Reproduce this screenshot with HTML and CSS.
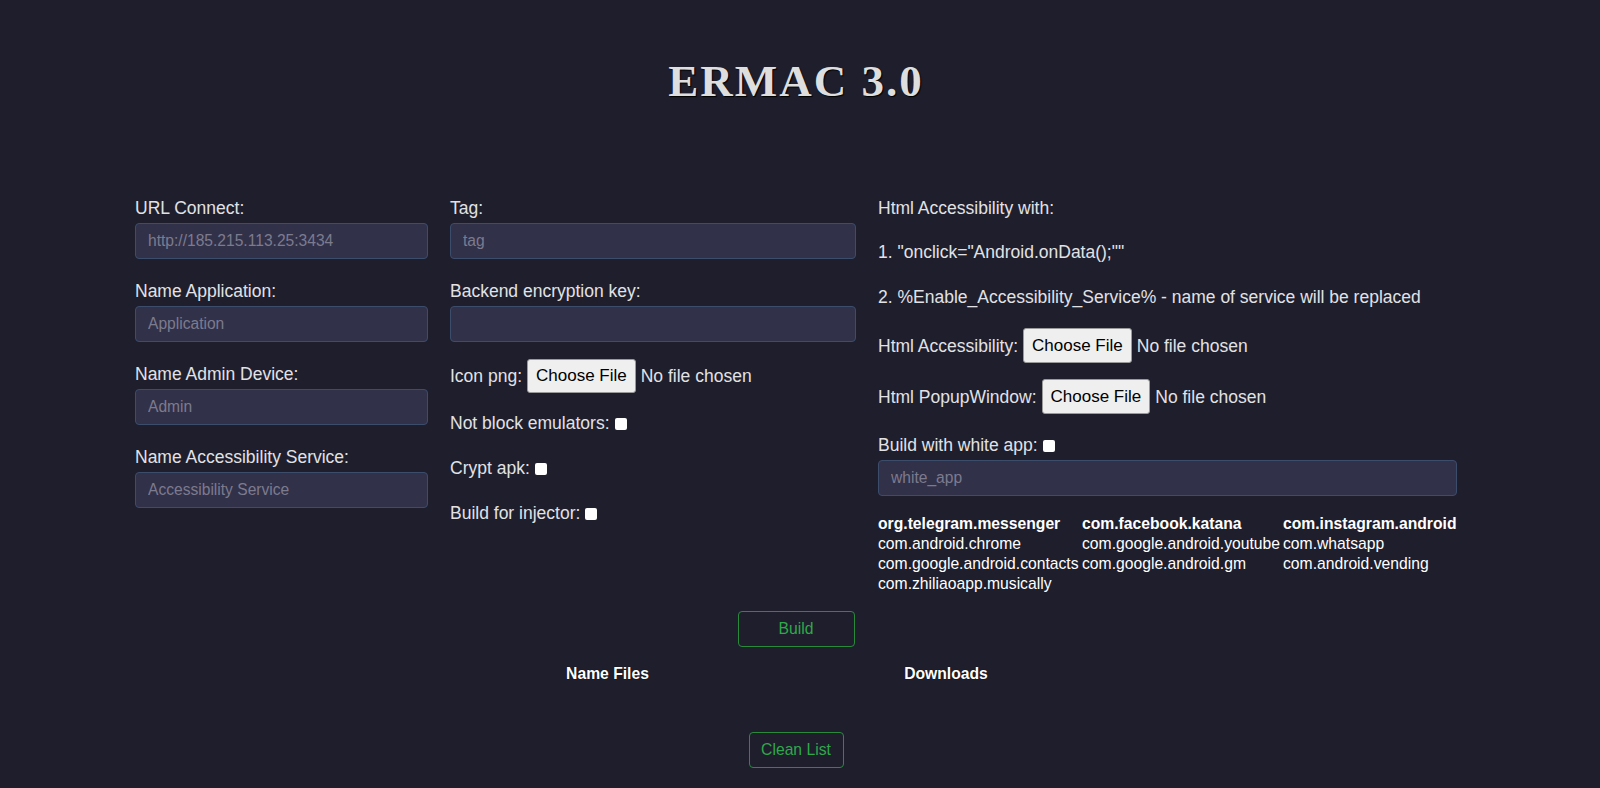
FILE: index.html
```html
<!DOCTYPE html>
<html lang="en">
<head>
<meta charset="utf-8">
<title>ERMAC 3.0</title>
<link rel="stylesheet" href="styles.css">
</head>
<body>
<div class="page">
  <h1 class="title">ERMAC 3.0</h1>
  <form class="form">
    <div class="col">
      <div class="field">
        <label class="label">URL Connect:</label>
        <input class="input" type="text" placeholder="http://185.215.113.25:3434">
      </div>
      <div class="field">
        <label class="label">Name Application:</label>
        <input class="input" type="text" placeholder="Application">
      </div>
      <div class="field">
        <label class="label">Name Admin Device:</label>
        <input class="input" type="text" placeholder="Admin">
      </div>
      <div class="field">
        <label class="label">Name Accessibility Service:</label>
        <input class="input" type="text" placeholder="Accessibility Service">
      </div>
    </div>
    <div class="col">
      <div class="field">
        <label class="label">Tag:</label>
        <input class="input" type="text" placeholder="tag">
      </div>
      <div class="field tight">
        <label class="label">Backend encryption key:</label>
        <input class="input" type="text">
      </div>
      <div class="file-row">
        <span>Icon png:</span>
        <span class="file-btn">Choose File</span>
        <span>No file chosen</span>
      </div>
      <div class="check-row first">Not block emulators:<input class="check" type="checkbox"></div>
      <div class="check-row">Crypt apk:<input class="check" type="checkbox"></div>
      <div class="check-row">Build for injector:<input class="check" type="checkbox"></div>
    </div>
    <div class="col">
      <p class="line">Html Accessibility with:</p>
      <p class="line l2">1. "onclick="Android.onData();""</p>
      <p class="line l3">2. %Enable_Accessibility_Service% - name of service will be replaced</p>
      <div class="file-row fr-a">
        <span>Html Accessibility:</span>
        <span class="file-btn tall">Choose File</span>
        <span>No file chosen</span>
      </div>
      <div class="file-row fr-b">
        <span>Html PopupWindow:</span>
        <span class="file-btn tall">Choose File</span>
        <span>No file chosen</span>
      </div>
      <div class="line l-white">Build with white app:<input class="check" type="checkbox"></div>
      <input class="input white-input" type="text" placeholder="white_app">
      <div class="packages">
        <span class="pkg-bold">org.telegram.messenger</span>
        <span class="pkg-bold">com.facebook.katana</span>
        <span class="pkg-bold">com.instagram.android</span>
        <span>com.android.chrome</span>
        <span>com.google.android.youtube</span>
        <span>com.whatsapp</span>
        <span>com.google.android.contacts</span>
        <span>com.google.android.gm</span>
        <span>com.android.vending</span>
        <span>com.zhiliaoapp.musically</span>
      </div>
    </div>
  </form>
  <div class="actions build-wrap">
    <button class="btn btn-build" type="button">Build</button>
  </div>
  <div class="files-head">
    <span class="fh-name">Name Files</span>
    <span class="fh-down">Downloads</span>
  </div>
  <div class="actions clean-wrap">
    <button class="btn btn-clean" type="button">Clean List</button>
  </div>
</div>
</body>
</html>
```

FILE: styles.css
```css
body {
  margin: 0;
  background: #1e1e2d;
  font-family: "Liberation Sans", Arial, sans-serif;
  color: #e2e2e4;
}

.page {
  width: 1322px;
  margin-left: 135px;
}

.title {
  margin: 0;
  padding-top: 59px;
  text-align: center;
  font-family: "Liberation Serif", "Times New Roman", serif;
  font-weight: bold;
  font-size: 45px;
  line-height: 45px;
  letter-spacing: 2px;
  color: #dedede;
  text-shadow: 1px 1px 1px #000;
}

.form {
  display: grid;
  grid-template-columns: 293px 406px 579px;
  column-gap: 22px;
  margin-top: 94px;
  align-items: start;
}

.col {
  display: flex;
  flex-direction: column;
}

.field {
  display: flex;
  flex-direction: column;
  gap: 5px;
  margin-bottom: 22px;
}

.field.tight {
  margin-bottom: 17px;
}

.label {
  font-size: 17.5px;
  line-height: 20px;
}

.input {
  box-sizing: border-box;
  height: 36px;
  width: 100%;
  margin: 0;
  padding: 0 12px;
  background: #32314a;
  border: 1px solid #3b4d6b;
  border-radius: 4px;
  font-family: "Liberation Sans", Arial, sans-serif;
  font-size: 15.6px;
  color: #dcdcdc;
  outline: none;
}

.input::placeholder {
  color: #7c7b8e;
}

.file-row {
  display: flex;
  align-items: center;
  gap: 5px;
  height: 34px;
  font-size: 17.5px;
  line-height: 20px;
}

.file-btn {
  box-sizing: border-box;
  display: flex;
  align-items: center;
  height: 34px;
  padding: 0 8px;
  background: #efefef;
  border: 1px solid #9a9a9a;
  border-radius: 3px;
  color: #000;
  font-size: 17px;
}

.file-btn.tall,
.fr-a,
.fr-b {
  height: 35px;
}

.check-row {
  font-size: 17.5px;
  line-height: 20px;
  margin-top: 25px;
}

.check-row.first {
  margin-top: 20px;
}

.check {
  -webkit-appearance: none;
  appearance: none;
  width: 12px;
  height: 12px;
  margin: 0 0 0 5px;
  background: #fff;
  border: none;
  border-radius: 2px;
  vertical-align: -1px;
}

.line {
  margin: 0;
  font-size: 17.5px;
  line-height: 20px;
}

.l2 {
  margin-top: 24px;
}

.l3 {
  margin-top: 25px;
}

.fr-a {
  margin-top: 21px;
}

.fr-b {
  margin-top: 16px;
}

.l-white {
  margin-top: 21px;
}

.white-input {
  margin-top: 5px;
}

.packages {
  display: grid;
  grid-template-columns: 204px 201px auto;
  margin-top: 17.6px;
  font-size: 15.7px;
  line-height: 20px;
  color: #fff;
  white-space: nowrap;
}

.pkg-bold {
  font-weight: bold;
}

.actions {
  display: flex;
  justify-content: center;
}

.build-wrap {
  margin-top: 17.4px;
}

.clean-wrap {
  margin-top: 48.4px;
}

.btn {
  box-sizing: border-box;
  height: 36px;
  padding: 0;
  background: transparent;
  border: 1px solid #2a8a3c;
  border-radius: 4px;
  color: #30a84a;
  font-family: "Liberation Sans", Arial, sans-serif;
  font-size: 15.7px;
}

.btn-build {
  width: 117px;
}

.btn-clean {
  width: 95px;
}

.files-head {
  display: flex;
  margin-top: 16.6px;
  margin-left: 322.5px;
  font-size: 15.7px;
  line-height: 20px;
  font-weight: bold;
  color: #fff;
  text-shadow: 0 0 1px #000;
}

.fh-name {
  width: 300px;
  text-align: center;
}

.fh-down {
  width: 377px;
  text-align: center;
}
```
